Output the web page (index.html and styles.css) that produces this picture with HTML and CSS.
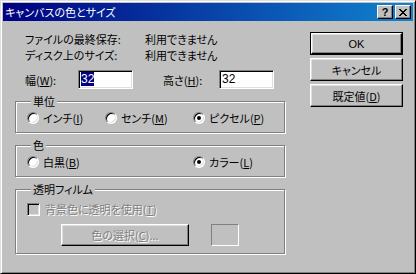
FILE: index.html
```html
<!DOCTYPE html>
<html lang="ja">
<head>
    <meta charset="UTF-8">
    <title>キャンバスの色とサイズ</title>
    <link rel="stylesheet" href="styles.css">
</head>
<body>
    <div class="window">
        <div class="titlebar">
            <span class="title">キャンバスの色とサイズ</span>
            <div class="title-buttons">
                <span class="tbtn help">?</span>
                <span class="tbtn close">
                    <svg width="8" height="7" viewBox="0 0 8 7"><path d="M0 0h2v1h1v1h2V1h1V0h2v1H7v1H6v1H5v1h1v1h1v1h1v1H6V6H5V5H3v1H2v1H0V6h1V5h1V4h1V3H2V2H1V1H0z" fill="#000"/></svg>
                </span>
            </div>
        </div>
        <div class="content">
            <div class="main">
                <div class="info">
                    <div class="info-row"><span class="info-label">ファイルの最終保存:</span><span>利用できません</span></div>
                    <div class="info-row"><span class="info-label">ディスク上のサイズ:</span><span>利用できません</span></div>
                </div>
                <div class="size-row">
                    <span class="size-label">幅(<u>W</u>):</span>
                    <span class="field"><span class="selected">32</span></span>
                    <span class="size-label wide">高さ(<u>H</u>):</span>
                    <span class="field">32</span>
                </div>
                <fieldset class="group">
                    <legend>単位</legend>
                    <div class="options units">
                        <span class="option"><span class="radio"></span>インチ(<u>I</u>)</span>
                        <span class="option"><span class="radio"></span>センチ(<u>M</u>)</span>
                        <span class="option"><span class="radio checked"></span>ピクセル(<u>P</u>)</span>
                    </div>
                </fieldset>
                <fieldset class="group">
                    <legend>色</legend>
                    <div class="options colors">
                        <span class="option"><span class="radio"></span>白黒(<u>B</u>)</span>
                        <span class="option"><span class="radio checked"></span>カラー(<u>L</u>)</span>
                    </div>
                </fieldset>
                <fieldset class="group">
                    <legend>透明フィルム</legend>
                    <div class="option check-row"><span class="checkbox"></span><span class="disabled">背景色に透明を使用(<u>T</u>)</span></div>
                    <div class="pick-row">
                        <span class="button pick"><span class="disabled">色の選択(<u>C</u>)...</span></span>
                        <span class="swatch"></span>
                    </div>
                </fieldset>
            </div>
            <div class="actions">
                <span class="button default"><span class="inner">OK</span></span>
                <span class="button">キャンセル</span>
                <span class="button">既定値(<u>D</u>)</span>
            </div>
        </div>
    </div>
</body>
</html>
```

FILE: styles.css
```css
body {
    margin: 0;
    font-family: "Noto Sans CJK JP", "Liberation Sans", sans-serif;
    font-size: 11px;
    font-feature-settings: "palt";
    color: #000;
}

u {
    text-decoration-thickness: 1px;
    text-underline-offset: 1px;
}

.window {
    width: 416px;
    height: 274px;
    box-sizing: border-box;
    background: #c0c0c0;
    border: 1px solid;
    border-color: #dfdfdf #000 #000 #dfdfdf;
    box-shadow: inset 1px 1px #fff, inset -1px -1px #808080;
    padding: 2px;
}

.titlebar {
    height: 18px;
    display: flex;
    align-items: center;
    justify-content: space-between;
    padding: 0 2px 0 2px;
    background: linear-gradient(to right, #000080, #1084d0);
}

.title {
    color: #fff;
    line-height: 18px;
}

.title-buttons {
    display: flex;
    gap: 2px;
}

.tbtn {
    width: 16px;
    height: 14px;
    box-sizing: border-box;
    background: #c0c0c0;
    border: 1px solid;
    border-color: #fff #000 #000 #fff;
    box-shadow: inset -1px -1px #808080;
    display: flex;
    align-items: center;
    justify-content: center;
    font-family: "Liberation Sans", sans-serif;
    font-weight: bold;
    font-size: 11px;
    line-height: 12px;
}

.content {
    display: flex;
    padding: 0 0 0 12px;
}

.main {
    width: 270px;
}

.info {
    margin-top: 10px;
    padding-left: 10px;
}

.info-row {
    display: flex;
    line-height: 16px;
}

.info-label {
    width: 120px;
}

.size-row {
    display: flex;
    align-items: center;
    margin-top: 7px;
    padding-left: 10px;
}

.size-label {
    width: 53px;
}

.size-label.wide {
    width: 56px;
    margin-left: 30px;
}

.field {
    width: 55px;
    height: 19px;
    box-sizing: border-box;
    background: #fff;
    border: 1px solid;
    border-color: #808080 #fff #fff #808080;
    box-shadow: inset 1px 1px #000, inset -1px -1px #dfdfdf;
    padding: 0 0 0 2px;
    line-height: 17px;
    font-family: "Liberation Sans", sans-serif;
    font-size: 12px;
}

.selected {
    background: #000080;
    color: #fff;
}

.group {
    margin: 5px 0 0 0;
    padding: 3px 10px 7px 11px;
    border: 1px solid #808080;
    box-shadow: inset 1px 1px #fff, 1px 1px #fff;
    min-inline-size: 0;
}

.group legend {
    padding: 0 2px;
    margin-left: 4px;
    line-height: 14px;
    background: #c0c0c0;
}

.options {
    display: grid;
    line-height: 14px;
}

.units {
    grid-template-columns: 78px 88px auto;
}

.colors {
    grid-template-columns: 166px auto;
}

.option {
    display: flex;
    align-items: center;
    line-height: 14px;
}

.radio {
    width: 12px;
    height: 12px;
    box-sizing: border-box;
    border-radius: 50%;
    border: 1px solid;
    border-color: #808080 #fff #fff #808080;
    background: #fff;
    box-shadow: inset 1px 1px #000, inset -1px -1px #dfdfdf;
    margin-right: 4px;
    display: flex;
    align-items: center;
    justify-content: center;
}

.radio.checked::after {
    content: "";
    width: 4px;
    height: 4px;
    border-radius: 50%;
    background: #000;
}

.check-row {
    margin-top: 3px;
}

.checkbox {
    width: 13px;
    height: 13px;
    box-sizing: border-box;
    border: 1px solid;
    border-color: #808080 #fff #fff #808080;
    box-shadow: inset 1px 1px #000, inset -1px -1px #dfdfdf;
    background: #c0c0c0;
    margin-right: 5px;
}

.disabled {
    color: #808080;
    text-shadow: 1px 1px #fff;
}

.pick-row {
    display: flex;
    margin-top: 8px;
    padding-left: 34px;
}

.button {
    display: flex;
    align-items: center;
    justify-content: center;
    box-sizing: border-box;
    background: #c0c0c0;
    border: 1px solid;
    border-color: #fff #000 #000 #fff;
    box-shadow: inset -1px -1px #808080, inset 1px 1px #dfdfdf;
    line-height: 14px;
}

.pick {
    width: 128px;
    height: 22px;
}

.swatch {
    width: 28px;
    height: 22px;
    box-sizing: border-box;
    margin-left: 22px;
    border: 1px solid;
    border-color: #808080 #fff #fff #808080;
}

.actions {
    display: flex;
    flex-direction: column;
    gap: 3px;
    margin: 11px 0 0 25px;
}

.actions .button {
    width: 93px;
    height: 23px;
}

.actions .button.default {
    border: 1px solid #000;
    box-shadow: none;
    padding: 0;
}

.default .inner {
    flex: 1;
    align-self: stretch;
    display: flex;
    align-items: center;
    justify-content: center;
    border: 1px solid;
    border-color: #fff #000 #000 #fff;
    box-shadow: inset -1px -1px #808080, inset 1px 1px #dfdfdf;
    font-family: "Liberation Sans", sans-serif;
}
```
